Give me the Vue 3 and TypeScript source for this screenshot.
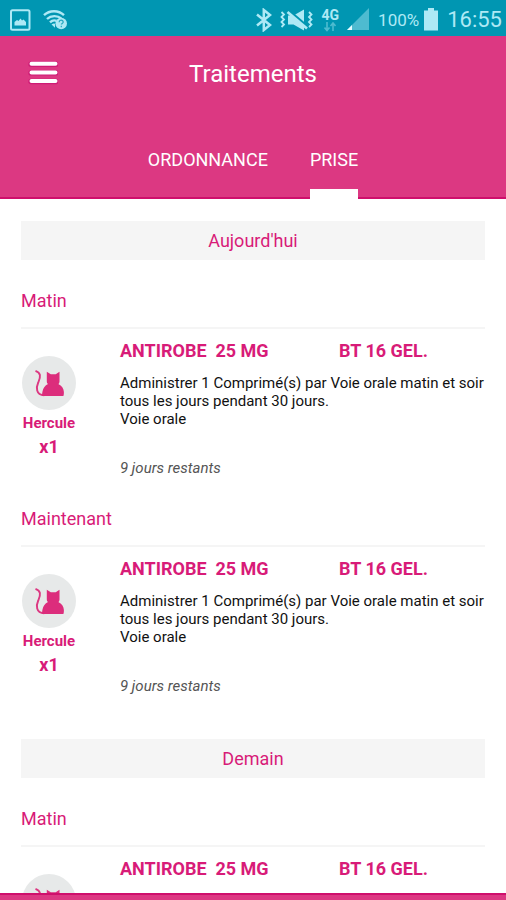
<script setup lang="ts">
import { ref } from 'vue'

interface Intake {
  period: string
  drug: string
  pack: string
  animal: string
  quantity: number
  directions: string
  route: string
  remaining: string
}

interface Day {
  label: string
  intakes: Intake[]
}

type TabId = 'ordonnance' | 'prise'

const tabs: { id: TabId; label: string }[] = [
  { id: 'ordonnance', label: 'ORDONNANCE' },
  { id: 'prise', label: 'PRISE' },
]
const activeTab = ref<TabId>('prise')

const intakeAt = (period: string): Intake => ({
  period,
  drug: 'ANTIROBE  25 MG',
  pack: 'BT 16 GEL.',
  animal: 'Hercule',
  quantity: 1,
  directions: 'Administrer 1 Comprimé(s) par Voie orale matin et soir tous les jours pendant 30 jours.',
  route: 'Voie orale',
  remaining: '9 jours restants',
})

const days: Day[] = [
  { label: "Aujourd'hui", intakes: [intakeAt('Matin'), intakeAt('Maintenant')] },
  { label: 'Demain', intakes: [intakeAt('Matin')] },
]
</script>

<template>
  <div class="app">
    <div class="status">
      <div class="status-group left">
        <svg width="22" height="22" viewBox="0 0 22 22" aria-hidden="true">
          <rect x="2" y="1.200" width="18.500" height="19.600" rx="1.500" fill="none" stroke="currentColor" stroke-width="2" />
          <path d="M5.500 16.500V13l2.500-2 1.500 1L11.500 9.500l1.500 2 1.500-1L17 13v3.500z" fill="currentColor" />
        </svg>
        <svg width="25" height="22" viewBox="0 0 25 22" aria-hidden="true">
          <g fill="none" stroke="currentColor" stroke-width="2.400">
            <path d="M1 6.200C6.500 1 15.500 1 21 6.200" />
            <path d="M4 10c4-3.800 10.500-3.800 14.200-.5" />
            <path d="M7 13.400c2-2 4.500-2.400 6.500-1.600" />
          </g>
          <path d="M8.500 15.500q2-1.500 3.500-.8v4z" fill="currentColor" />
          <circle cx="18.200" cy="14.500" r="5.800" fill="currentColor" />
          <path d="M16.200 13.200c0-2.800 4.200-2.600 4 0-.1 1.200-1.900 1.200-1.900 2.400M18.300 16.800v1.500" fill="none" stroke="#0096b2" stroke-width="1.200" opacity=".8" />
        </svg>
      </div>
      <div class="status-group right">
        <svg width="16" height="24" viewBox="0 0 16 24" aria-hidden="true">
          <path d="M1 6.500l13 10.500-6.200 5V2L14 7 1 17.500" fill="none" stroke="currentColor" stroke-width="2.500" />
        </svg>
        <svg class="mute" width="34" height="24" viewBox="0 0 34 24" aria-hidden="true">
          <path d="M8 7.500h5.500L24 1.500v21l-10.500-6H8z" fill="currentColor" />
          <path d="M7 1.500l21 18" stroke="#0096b2" stroke-width="3.500" />
          <path d="M7.500 4l19.500 16.500" stroke="currentColor" stroke-width="2.600" />
          <path d="M1.500 4l2.500 2.500-2.500 2.500L4 11.500 1.500 14 4 16.500 1.500 19M29 4l2.500 2.500L29 9l2.500 2.500L29 14l2.500 2.500L29 19" fill="none" stroke="currentColor" stroke-width="1.800" />
        </svg>
        <div class="network">
          <span>4G</span>
          <svg width="12" height="10" viewBox="0 0 12 10" aria-hidden="true">
            <path d="M3 0v8M.5 5.500L3 8.500l2.500-3M9 9V1M6.500 4L9 1l2.500 3" fill="none" stroke="currentColor" stroke-width="1.600" opacity=".45" />
          </svg>
        </div>
        <svg class="signal" width="23" height="23" viewBox="0 0 23 23" aria-hidden="true">
          <path d="M22 0v22H0z" fill="currentColor" opacity=".45" />
          <path d="M5 17v5H0z" fill="#e6fbff" />
        </svg>
        <span class="percent">100%</span>
        <svg class="battery" width="16" height="24" viewBox="0 0 16 24" aria-hidden="true">
          <path d="M5 0h6v2.500h4V22.500H1V2.500h4z" fill="currentColor" />
        </svg>
        <span class="clock">16:55</span>
      </div>
    </div>

    <header class="header">
      <div class="bar">
        <button class="menu" type="button" aria-label="Menu">
          <svg width="30" height="28" viewBox="0 0 30 28" aria-hidden="true">
            <path d="M3 4.300h25M3 12.900h25M3 21.500h25" stroke="#c4006c" stroke-width="5.400" stroke-linecap="round" opacity=".5" />
            <path d="M3.500 3.800h24M3.500 12.400h24M3.500 21h24" stroke="#fff" stroke-width="4" stroke-linecap="round" />
          </svg>
        </button>
        <h1>Traitements</h1>
      </div>
      <nav class="tabs">
        <button
          v-for="tab in tabs"
          :key="tab.id"
          type="button"
          class="tab"
          :class="{ active: tab.id === activeTab }"
          :aria-pressed="tab.id === activeTab"
          @click="activeTab = tab.id"
        >
          {{ tab.label }}
        </button>
      </nav>
    </header>

    <main class="content">
      <section v-for="day in days" :key="day.label" class="day">
        <h2>{{ day.label }}</h2>
        <article v-for="intake in day.intakes" :key="intake.period" class="intake">
          <h3>{{ intake.period }}</h3>
          <div class="entry">
            <div class="animal">
              <svg class="avatar" viewBox="0 0 54 54" aria-hidden="true">
                <circle cx="27" cy="27" r="27" fill="#e7e9e9" />
                <path d="M13.500 14.800c2 .8 4 2 4.400 4.200.5 3-.6 5-1.700 7.500-1.200 2.800-1.700 5.500-1 8 .8 3 3 4.500 7 4.700" fill="none" stroke="#dc3882" stroke-width="1.900" />
                <path d="M24.800 15.800l4 2.500h4.900l3.800-2.500v9.400c0 1.500-.5 2.300-1.200 2.900 3.500 1.600 5.400 4.600 5.600 8 .1 1.500-.1 2.900-.5 4H20.500c-.5-1.400-.4-2.800 0-4.500.7-3.500 2.500-6 5.500-7.500-.8-.7-1.200-1.600-1.200-2.900z" fill="#dc2d7c" />
              </svg>
              <span class="animal-name">{{ intake.animal }}</span>
              <span class="quantity">x{{ intake.quantity }}</span>
            </div>
            <div class="details">
              <div class="drug">
                <strong>{{ intake.drug }}</strong>
                <strong>{{ intake.pack }}</strong>
              </div>
              <p class="directions">{{ intake.directions }}<br />{{ intake.route }}</p>
              <p class="remaining">{{ intake.remaining }}</p>
            </div>
          </div>
        </article>
      </section>
    </main>
    <div class="footer"></div>
  </div>
</template>

<style>
body {
  margin: 0;
  background: #fff;
}
</style>

<style scoped>
.app {
  display: flex;
  flex-direction: column;
  height: 100vh;
  font-family: Roboto, "Liberation Sans", sans-serif;
  color: #d81b78;
}

h1,
h2,
h3,
p {
  margin: 0;
  font-weight: 400;
}

button {
  padding: 0;
  border: 0;
  background: none;
  color: inherit;
  font: inherit;
  cursor: pointer;
}

svg {
  display: block;
  flex: none;
}

.status {
  display: flex;
  justify-content: space-between;
  align-items: center;
  height: 36px;
  flex: none;
  padding: 3px 4px 0 9px;
  box-sizing: border-box;
  background: #0096b2;
  color: #aee9f5;
}

.status-group {
  display: flex;
  align-items: center;
}

.left {
  gap: 12px;
}

.right {
  gap: 8px;
}

.network {
  display: flex;
  flex-direction: column;
  align-items: center;
  font-size: 14px;
  line-height: 14px;
  font-weight: 700;
}

.percent {
  font-size: 17px;
}

.battery {
  margin-left: -4px;
}

.clock {
  font-size: 22px;
}

.header {
  flex: none;
  background: #dc3882;
  border-bottom: 2px solid #cf0f6c;
  color: #fff;
}

.bar {
  display: grid;
  grid-template-columns: 1fr auto 1fr;
  align-items: center;
  height: 76px;
  padding: 0 28px;
}

.menu {
  justify-self: start;
}

h1 {
  font-size: 24px;
  line-height: 28px;
}

.tabs {
  display: flex;
  justify-content: center;
  gap: 42px;
  height: 85px;
}

.tab {
  position: relative;
  font-size: 18px;
  line-height: 20px;
  padding-top: 10px;
}

.tab.active::after {
  content: "";
  position: absolute;
  left: 0;
  right: 0;
  bottom: -2px;
  height: 10px;
  background: #fff;
}

.content {
  flex: 1;
  min-height: 0;
  overflow-y: auto;
  scrollbar-width: none;
  padding: 0 21px;
}

.day {
  padding-top: 22px;
}

.day + .day {
  padding-top: 43px;
}

h2 {
  background: #f5f5f5;
  text-align: center;
  font-size: 18px;
  line-height: 39px;
}

h3 {
  padding: 31px 0 16px;
  border-bottom: 2px solid #f5f5f5;
  font-size: 18px;
  line-height: 20px;
}

.entry {
  display: flex;
  gap: 43px;
  padding-top: 12px;
}

.animal {
  display: flex;
  flex-direction: column;
  align-items: center;
  flex: none;
  width: 56px;
  padding-top: 15px;
  font-weight: 700;
}

.avatar {
  width: 54px;
  height: 54px;
}

.animal-name {
  margin-top: 3px;
  font-size: 15px;
  line-height: 20px;
}

.quantity {
  margin-top: 4px;
  font-size: 18px;
  line-height: 20px;
}

.details {
  flex: 1;
  min-width: 0;
}

.drug {
  display: grid;
  grid-template-columns: 3fr 2fr;
  font-size: 18px;
  line-height: 20px;
  white-space: pre;
}

.directions {
  margin-top: 13px;
  font-size: 15px;
  line-height: 18px;
  color: #111;
}

.remaining {
  margin-top: 30px;
  font-size: 15px;
  line-height: 20px;
  font-style: italic;
  color: #555;
}

.footer {
  flex: none;
  height: 5px;
  background: #dc3882;
  border-top: 2px solid #cf0f6c;
}
</style>
